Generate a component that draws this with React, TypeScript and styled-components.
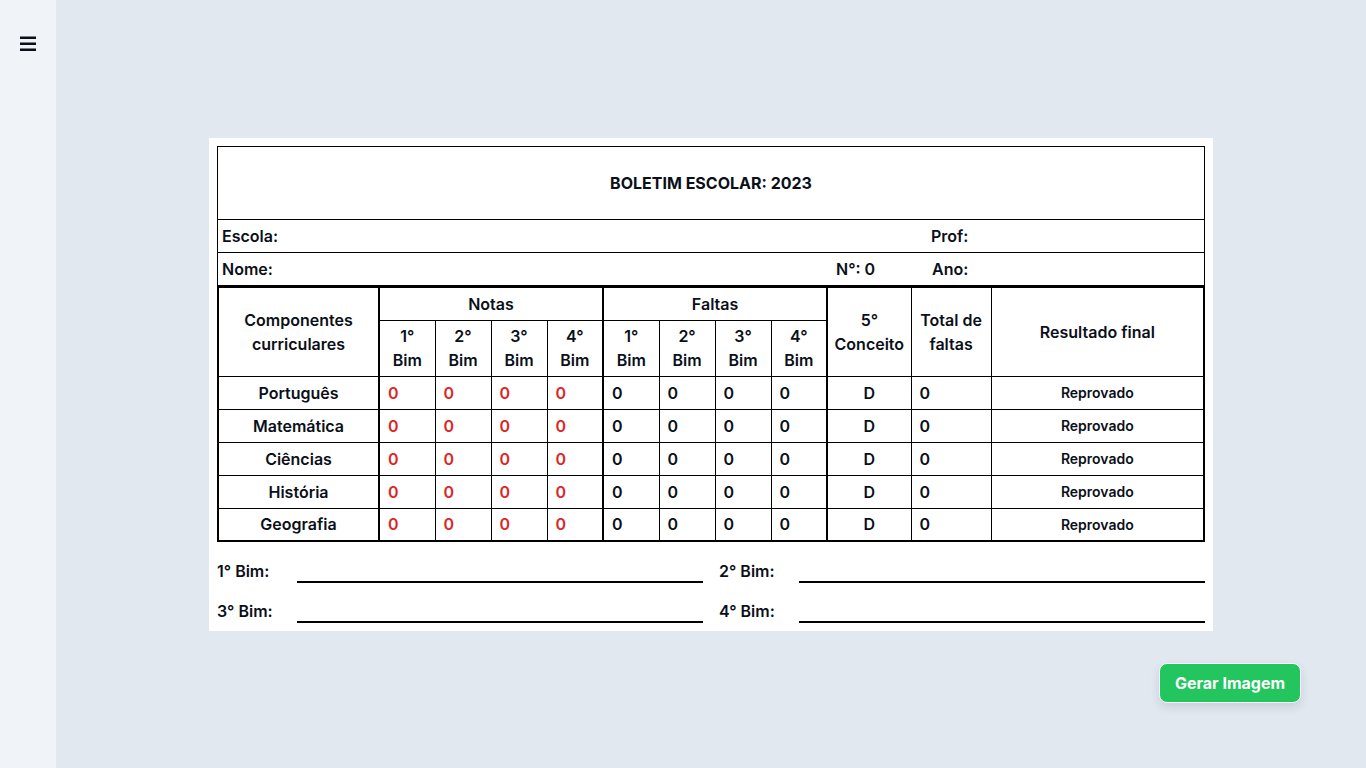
import React from "react";
import styled, { createGlobalStyle } from "styled-components";

const Global = createGlobalStyle`
  html, body { margin: 0; padding: 0; }
  body { font-family: Inter, "Noto Sans", sans-serif; color: #0b0f19; background: #e2e8f0; }
  * { box-sizing: border-box; }
`;

const Page = styled.div`
  display: flex;
  min-height: 768px;
`;

const Sidebar = styled.aside`
  width: 56px;
  flex: none;
  background: #f0f4f9;
  padding: 36px 0 0 20px;
`;

const MenuButton = styled.button`
  border: 0;
  background: none;
  padding: 0;
  width: 16px;
  height: 16px;
  display: block;
  cursor: pointer;
`;

const Main = styled.main`
  flex: 1;
  display: flex;
  flex-direction: column;
  align-items: center;
  padding-top: 138px;
`;

const Card = styled.section`
  width: 1004px;
  background: #fff;
  padding: 8px;
`;

const TitleBox = styled.div`
  height: 74px;
  border: 1px solid #000;
  display: flex;
  align-items: center;
  justify-content: center;
  font-weight: 700;
  font-size: 16px;
`;

const InfoRow = styled.div`
  height: 33px;
  border: 1px solid #000;
  border-top: 0;
  display: flex;
  align-items: center;
  font-weight: 600;
  font-size: 16px;
  padding-left: 4px;
`;

const Field = styled.div<{ $w?: number }>`
  ${(p) => (p.$w ? `width: ${p.$w}px; flex: none;` : "flex: 1;")}
`;

const Table = styled.table`
  width: 986px;
  border-collapse: collapse;
  table-layout: fixed;
  border: 2px solid #000;
  font-size: 16px;
  font-weight: 600;
`;

const Th = styled.th<{ $thickL?: boolean; $h?: number }>`
  border: 1px solid #000;
  ${(p) => (p.$thickL ? "border-left: 2px solid #000;" : "")}
  ${(p) => (p.$h ? `height: ${p.$h}px;` : "")}
  font-weight: 600;
  line-height: 24px;
  padding: 0;
  text-align: center;
`;

const Td = styled.td<{ $thickL?: boolean; $align?: string; $red?: boolean; $small?: boolean }>`
  border: 1px solid #000;
  ${(p) => (p.$thickL ? "border-left: 2px solid #000;" : "")}
  height: 33px;
  padding: ${(p) => (p.$align === "left" ? "0 0 0 8px" : "0")};
  text-align: ${(p) => p.$align || "center"};
  color: ${(p) => (p.$red ? "#dc2626" : "#0b0f19")};
  font-size: ${(p) => (p.$small ? "14px" : "16px")};
  font-weight: 600;
`;

const Footer = styled.div`
  display: grid;
  grid-template-columns: 1fr 1fr;
  column-gap: 16px;
  row-gap: 16px;
  margin-top: 17px;
`;

const SignRow = styled.div`
  display: flex;
  align-items: flex-end;
  height: 24px;
`;

const SignLabel = styled.span`
  width: 80px;
  flex: none;
  font-size: 16px;
  font-weight: 600;
  line-height: 24px;
  align-self: center;
`;

const SignLine = styled.div`
  flex: 1;
  border-bottom: 2px solid #000;
`;

const Actions = styled.div`
  width: 1310px;
  display: flex;
  justify-content: flex-end;
  padding-right: 65px;
  margin-top: 32px;
`;

const GreenButton = styled.button`
  width: 142px;
  height: 40px;
  background: #22c55e;
  color: #fff;
  border: 1px solid #fff;
  border-radius: 8px;
  font-family: Inter, sans-serif;
  font-weight: 700;
  font-size: 16px;
  box-shadow: 0 4px 10px rgba(15, 23, 42, 0.12);
  cursor: pointer;
`;

const subjects = ["Português", "Matemática", "Ciências", "História", "Geografia"];

export default function App() {
  return (
    <>
      <Global />
      <Page>
        <Sidebar>
          <MenuButton aria-label="menu">
            <svg width="16" height="16" viewBox="0 0 16 16">
              <rect x="0" y="0.5" width="16" height="2.5" fill="#0b0f19" />
              <rect x="0" y="6.5" width="16" height="2.5" fill="#0b0f19" />
              <rect x="0" y="12.5" width="16" height="2.5" fill="#0b0f19" />
            </svg>
          </MenuButton>
        </Sidebar>
        <Main>
          <Card>
            <TitleBox>BOLETIM ESCOLAR: 2023</TitleBox>
            <InfoRow>
              <Field>Escola:</Field>
              <Field $w={273}>Prof:</Field>
            </InfoRow>
            <InfoRow>
              <Field>Nome:</Field>
              <Field $w={96}>N°: 0</Field>
              <Field $w={272}>Ano:</Field>
            </InfoRow>
            <Table>
              <colgroup>
                <col style={{ width: 161 }} />
                {Array.from({ length: 8 }).map((_, i) => (
                  <col key={i} style={{ width: 56 }} />
                ))}
                <col style={{ width: 84 }} />
                <col style={{ width: 80 }} />
                <col style={{ width: 213 }} />
              </colgroup>
              <thead>
                <tr>
                  <Th rowSpan={2}>
                    Componentes
                    <br />
                    curriculares
                  </Th>
                  <Th colSpan={4} $thickL $h={33}>Notas</Th>
                  <Th colSpan={4} $thickL>Faltas</Th>
                  <Th rowSpan={2} $thickL>
                    5°
                    <br />
                    Conceito
                  </Th>
                  <Th rowSpan={2}>
                    Total de
                    <br />
                    faltas
                  </Th>
                  <Th rowSpan={2}>Resultado final</Th>
                </tr>
                <tr>
                  {Array.from({ length: 8 }).map((_, i) => (
                    <Th key={i} $thickL={i === 0 || i === 4} $h={56}>
                      {(i % 4) + 1}°
                      <br />
                      Bim
                    </Th>
                  ))}
                </tr>
              </thead>
              <tbody>
                {subjects.map((s) => (
                  <tr key={s}>
                    <Td>{s}</Td>
                    {Array.from({ length: 8 }).map((_, i) => (
                      <Td key={i} $align="left" $red={i < 4} $thickL={i === 0 || i === 4}>
                        0
                      </Td>
                    ))}
                    <Td $thickL>D</Td>
                    <Td $align="left">0</Td>
                    <Td $small>Reprovado</Td>
                  </tr>
                ))}
              </tbody>
            </Table>
            <Footer>
              {["1° Bim:", "2° Bim:", "3° Bim:", "4° Bim:"].map((l) => (
                <SignRow key={l}>
                  <SignLabel>{l}</SignLabel>
                  <SignLine />
                </SignRow>
              ))}
            </Footer>
          </Card>
          <Actions>
            <GreenButton>Gerar Imagem</GreenButton>
          </Actions>
        </Main>
      </Page>
    </>
  );
}
